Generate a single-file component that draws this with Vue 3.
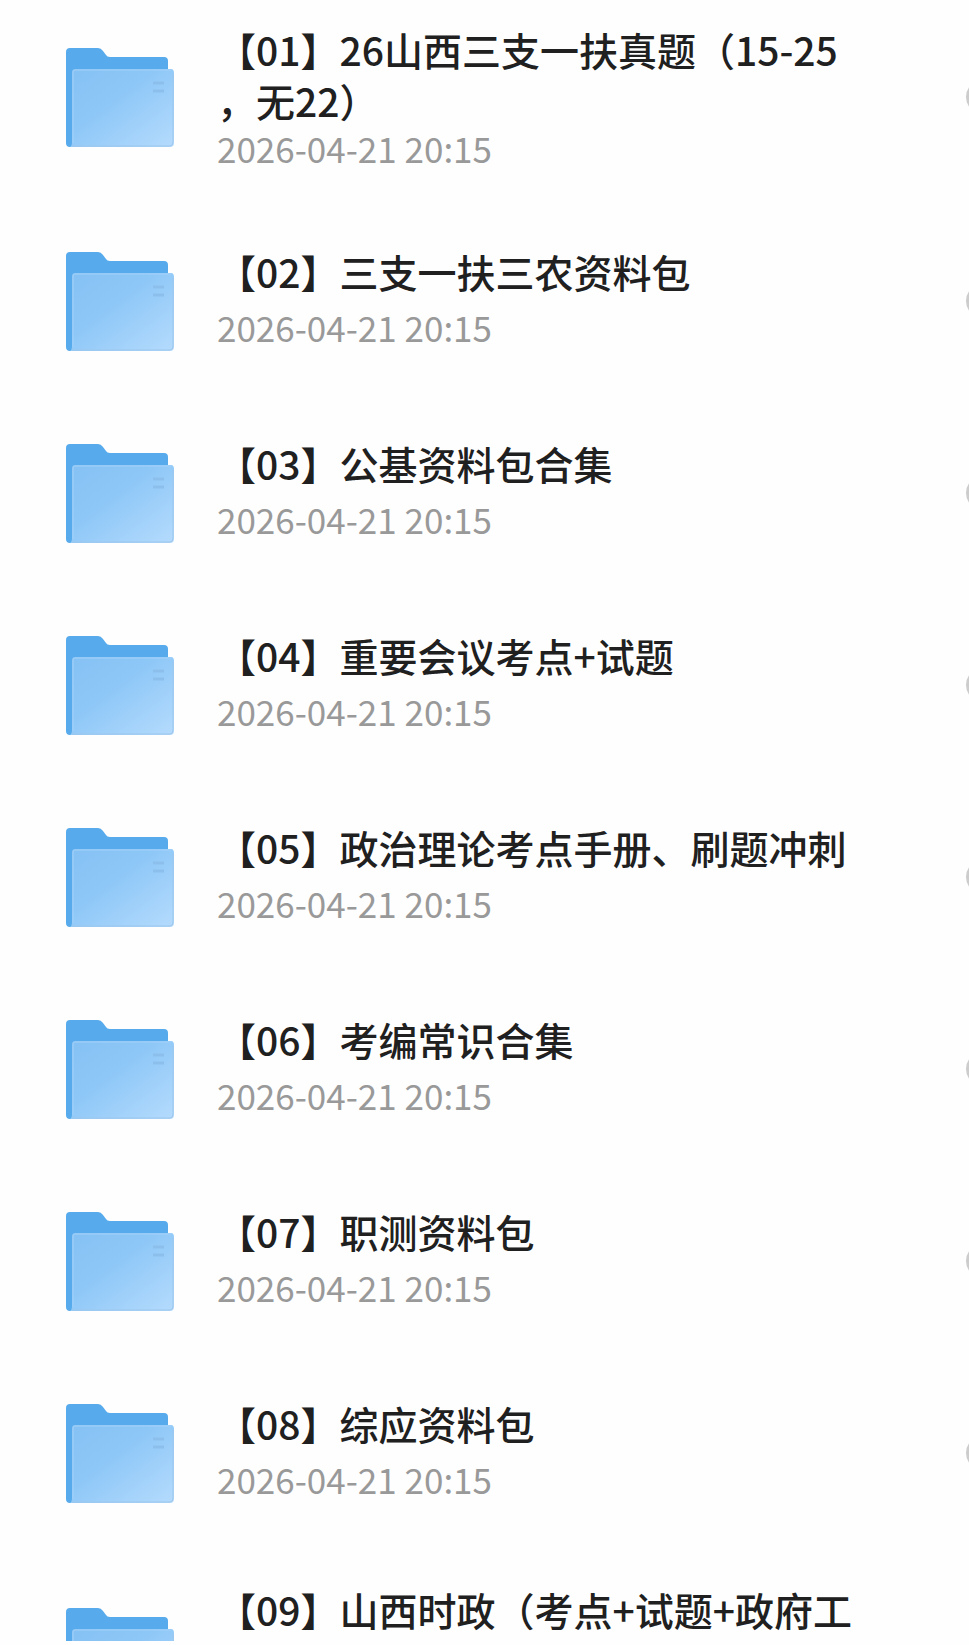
<template>
  <main class="file-page">
    <ul class="file-list">
      <li
        v-for="folder in folders"
        :key="folder.id"
        class="file-row"
        :class="{ tall: folder.tall }"
      >
        <svg class="folder-icon" viewBox="0 0 108 99" aria-hidden="true">
          <defs>
            <linearGradient :id="'front-' + folder.id" x1="0" y1="0" x2="1" y2="1">
              <stop offset="0" stop-color="#86c1f4" />
              <stop offset="0.4" stop-color="#8dc7f7" />
              <stop offset="1" stop-color="#b5dbfd" />
            </linearGradient>
          </defs>
          <path
            d="M4 0H32Q35 0 37 3L40 7Q41 9 44 9H98Q102 9 102 13V92H6V99H4Q0 99 0 95V4Q0 0 4 0Z"
            fill="#57aaeb"
          />
          <path
            d="M9 21H105Q108 21 108 25V95Q108 99 104 99H4Q6 98 6 94V24Q6 21 9 21Z"
            :fill="'url(#front-' + folder.id + ')'"
          />
          <path d="M7 95V24Q7 22 9 22H105" fill="none" stroke="#a3d1f8" stroke-width="1" />
          <path d="M6 98H104Q107 98 107 94V26" fill="none" stroke="#9cc6ec" stroke-width="1" />
          <path d="M87 35H98M87 43H98" fill="none" stroke="#8dbfec" stroke-width="3" />
        </svg>

        <div class="file-info">
          <label class="file-name" :for="'pick-' + folder.id">{{ folder.name }}</label>
          <time class="file-date">{{ folder.date }}</time>
        </div>

        <input :id="'pick-' + folder.id" v-model="selected" :value="folder.id" type="checkbox" />
      </li>
    </ul>
  </main>
</template>

<script setup>
import { ref } from 'vue'

const selected = ref([])

const folders = ref([
  { id: 1, name: '【01】26山西三支一扶真题（15-25，无22）', date: '2026-04-21 20:15' },
  { id: 2, name: '【02】三支一扶三农资料包', date: '2026-04-21 20:15' },
  { id: 3, name: '【03】公基资料包合集', date: '2026-04-21 20:15' },
  { id: 4, name: '【04】重要会议考点+试题', date: '2026-04-21 20:15' },
  { id: 5, name: '【05】政治理论考点手册、刷题冲刺', date: '2026-04-21 20:15' },
  { id: 6, name: '【06】考编常识合集', date: '2026-04-21 20:15' },
  { id: 7, name: '【07】职测资料包', date: '2026-04-21 20:15' },
  { id: 8, name: '【08】综应资料包', date: '2026-04-21 20:15' },
  { id: 9, name: '【09】山西时政（考点+试题+政府工', date: '', tall: true },
])
</script>

<style>
body {
  background: #fefefe;
}
</style>

<style scoped>
.file-page {
  box-sizing: border-box;
  height: 100vh;
  padding-bottom: 4px;
  font-family: 'Noto Sans CJK SC', sans-serif;
}

.file-list {
  height: 100%;
  margin: 0;
  padding: 0;
  overflow: hidden;
  list-style: none;
}

.file-row {
  display: flex;
  align-items: center;
  box-sizing: border-box;
  min-height: 192px;
  padding: 35px 0 35px 66px;
}

/* the list is scrolled a little past its top */
.file-row:first-child {
  margin-top: -11px;
}

.folder-icon {
  flex: none;
  width: 108px;
  height: 99px;
}

.file-info {
  flex: 1;
  min-width: 0;
  min-height: 111px;
  margin: 0 97px 0 43px;
}

.file-name {
  display: block;
  min-height: 59px;
  color: #202020;
  font-size: 39px;
  font-weight: 500;
  line-height: 51px;
  line-break: anywhere;
  text-spacing-trim: space-all;
}

.tall .file-name {
  min-height: 102px;
}

.file-date {
  display: block;
  min-height: 44px;
  color: #999999;
  font-size: 35px;
  line-height: 44px;
}

input {
  flex: none;
  appearance: none;
  box-sizing: border-box;
  width: 34px;
  height: 34px;
  margin: 0 -31px 0 0;
  border: 4px solid #cccccc;
  border-radius: 50%;
  cursor: pointer;
}

input:checked {
  background: #57aaeb;
  border-color: #57aaeb;
}
</style>
